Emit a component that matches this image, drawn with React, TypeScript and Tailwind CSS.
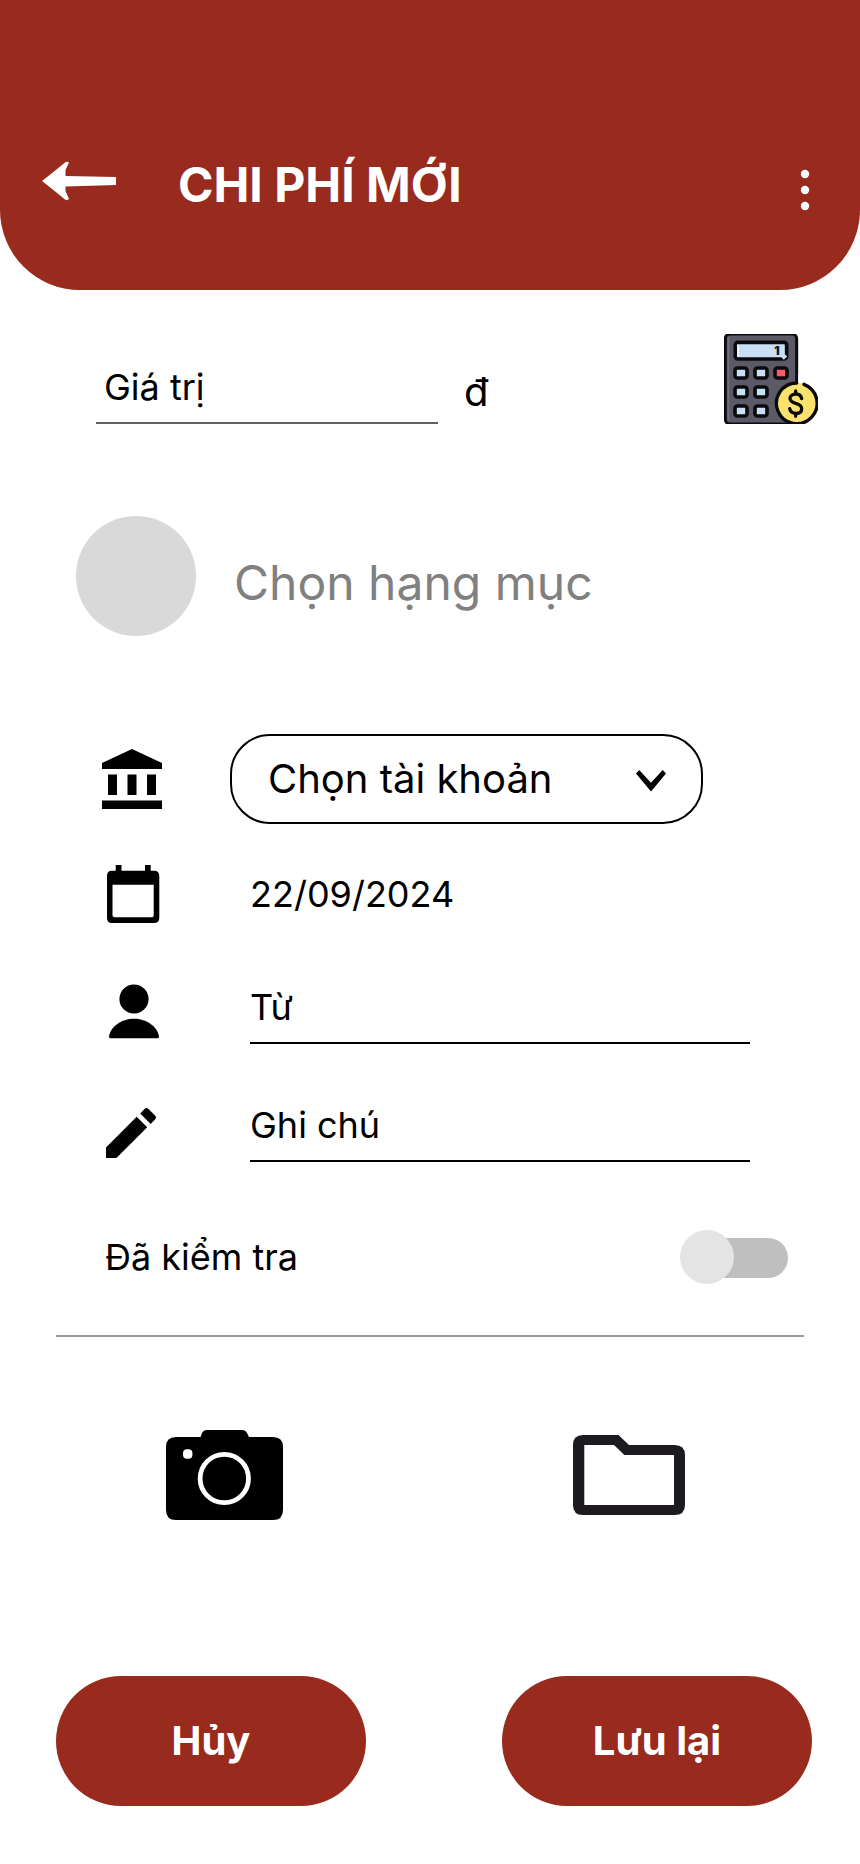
import { useState } from "react";

function BackArrow() {
  return (
    <svg viewBox="0 0 74 48" className="h-12 w-[74px]" fill="#fff" aria-hidden="true">
      <path d="M0 20 L12 10.500 L23 1.500 Q25 0 27 1.500 L23.500 9 V15 L74 16 V24 L23.500 25.500 V30 L27 38 Q25 40 23 38.500 L12 29.500 Z" />
    </svg>
  );
}

function MoreDots() {
  return (
    <svg viewBox="0 0 24 60" className="h-[60px] w-6" fill="#fff" aria-hidden="true">
      <circle cx="12" cy="19" r="4.200" />
      <circle cx="12" cy="35" r="4.200" />
      <circle cx="12" cy="51" r="4.200" />
    </svg>
  );
}

const keys = [
  { x: 51, y: 117, fill: "#c9dff5" },
  { x: 111, y: 117, fill: "#c9dff5" },
  { x: 171, y: 117, fill: "#fb5a68" },
  { x: 51, y: 174, fill: "#c9dff5" },
  { x: 111, y: 174, fill: "#c9dff5" },
  { x: 51, y: 231, fill: "#c9dff5" },
  { x: 111, y: 231, fill: "#c9dff5" },
];

function Calculator() {
  return (
    <svg viewBox="0 0 282 270" className="h-[90px] w-[94px]" aria-hidden="true">
      <rect x="4" y="0" width="214" height="270" rx="14" fill="#5d5a67" stroke="#0b0b0f" strokeWidth="9" />
      <path d="M13 10 V258" stroke="#737080" strokeWidth="5" />
      <rect x="34" y="25" width="154" height="50" rx="8" fill="#c9dff5" stroke="#0b0b0f" strokeWidth="11" />
      <path d="M42 32 V68" stroke="#e6f1fb" strokeWidth="6" />
      <path d="M176 74 L186 64" stroke="#c9dff5" strokeWidth="10" />
      <text x="151" y="63" fontFamily="Inter, sans-serif" fontWeight="900" fontSize="36" fill="#15151a">1</text>
      {keys.map((k) => (
        <rect key={`${k.x}-${k.y}`} x={k.x - 18} y={k.y - 15} width="36" height="30" rx="7" fill={k.fill} stroke="#0b0b0f" strokeWidth="11" />
      ))}
      <path d="M223 120 H290 V270 H223 Z" fill="#fff" />
      <circle cx="218" cy="208" r="62" fill="#fbe26d" />
      <path d="M240 151 A61 61 0 1 1 218 147" fill="none" stroke="#0b0b0f" strokeWidth="10" strokeLinecap="round" />
      <path
        d="M233 194 C231 184 224 180 216 180 C205 180 198 186 198 193 C198 202 205 205 215 208 C226 211 233 215 233 224 C233 233 226 238 216 238 C206 238 199 233 197 224 M215 179 V171 M215 239 V247"
        fill="none"
        stroke="#0b0b0f"
        strokeWidth="10"
        strokeLinecap="round"
      />
    </svg>
  );
}

function BankIcon() {
  return (
    <svg viewBox="0 0 60 60" className="size-[60px] shrink-0" aria-hidden="true">
      <path d="M0 14 L30 0 L60 14 V20 H0 Z M6 25.500 H15 V46 H6 Z M25.500 25.500 H34.500 V46 H25.500 Z M45 25.500 H54 V46 H45 Z M0 51.500 H60 V60 H0 Z" />
    </svg>
  );
}

function CalendarIcon() {
  return (
    <svg viewBox="0 0 60 60" className="size-[60px] shrink-0" aria-hidden="true">
      <path
        fillRule="evenodd"
        d="M13.700 1 H19.500 V6.700 H43 V1 H48.700 V6.700 H52 Q57.300 6.700 57.300 12 V54 Q57.300 59 52 59 H10 Q5 59 5 54 V12 Q5 6.700 10 6.700 H13.700 Z M10.500 20.700 V52 L12 53.300 H50.500 L51.700 52 V20.700 Z"
      />
    </svg>
  );
}

function PersonIcon() {
  return (
    <svg viewBox="0 0 60 60" className="size-[60px] shrink-0" aria-hidden="true">
      <circle cx="32" cy="15" r="14.600" />
      <path d="M8.500 54.300 Q7 54.300 7 52.500 C8.500 42.500 19.500 34.700 32 34.700 S55.500 42.500 57 52.500 Q57 54.300 55.500 54.300 Z" />
    </svg>
  );
}

function PencilIcon() {
  return (
    <svg viewBox="0 0 60 60" className="size-[60px] shrink-0" aria-hidden="true">
      <path d="M4 45.500 L34.700 14.700 L45.200 25.200 L14.400 56 H4 Z M38.200 11.500 L42.500 7 Q44.500 5 46.500 7 L53 13.500 Q55 15.500 53 17.500 L48.600 22 Z" />
    </svg>
  );
}

function CameraIcon() {
  return (
    <svg viewBox="0 0 117 90" className="h-[90px] w-[117px]" aria-hidden="true">
      <path d="M10 7 H34.500 L36 3 Q37.500 0 41 0 H76 Q79.500 0 81 3 L83 7 H107 Q117 7 117 17 V80 Q117 90 107 90 H10 Q0 90 0 80 V17 Q0 7 10 7 Z" />
      <rect x="17" y="19.300" width="9.400" height="9.400" rx="4" fill="#fff" />
      <circle cx="58.300" cy="48.500" r="24.200" fill="none" stroke="#fff" strokeWidth="4.800" />
    </svg>
  );
}

function FolderIcon() {
  return (
    <svg viewBox="0 0 112 80" className="h-20 w-28" fill="#1d1b20" aria-hidden="true">
      <path
        fillRule="evenodd"
        d="M10 0 H45.500 L56 10 H101.500 Q112 10 112 20 V70 Q112 80 101.500 80 H10 Q0 80 0 70 V10 Q0 0 10 0 Z M11.300 10 V70 H101 V20 H51.300 L41 10 Z"
      />
    </svg>
  );
}

const field =
  "h-[72px] min-w-0 border-b-2 bg-transparent text-4xl text-black placeholder:text-black placeholder:opacity-100 outline-none";

export default function App() {
  const [checked, setChecked] = useState(false);

  return (
    <div className="min-h-screen bg-white font-[Inter,sans-serif] text-black">
      <header className="flex items-center rounded-b-[80px] bg-[#982a1e] pt-[145px] pr-[43px] pb-[65px] pl-[42px]">
        <button type="button" aria-label="Quay lại" className="shrink-0">
          <BackArrow />
        </button>
        <h1 className="ml-[62px] flex-1 text-5xl leading-[80px] font-bold text-white">CHI PHÍ MỚI</h1>
        <button type="button" aria-label="Tùy chọn khác" className="shrink-0">
          <MoreDots />
        </button>
      </header>

      <form onSubmit={(e) => e.preventDefault()}>
        <div className="flex items-end pt-11 pr-[42px] pl-24">
          <input type="text" aria-label="Giá trị" placeholder="Giá trị" className={`${field} w-[342px] border-[#606060] pl-2`} />
          <span className="ml-[26px] text-[40px] leading-[64px]">đ</span>
          <button type="button" aria-label="Máy tính" className="ml-auto shrink-0">
            <Calculator />
          </button>
        </div>

        <button type="button" className="mt-[92px] ml-[76px] flex items-center gap-[38px]">
          <span className="size-[120px] rounded-full bg-[#d9d9d9]" />
          <span className="pt-3.5 text-5xl text-[#808080]">Chọn hạng mục</span>
        </button>

        <div className="mt-[98px] pr-[110px] pl-[102px]">
          <div className="flex items-center">
            <BankIcon />
            <div className="relative mr-[47px] ml-[68px] min-w-0 flex-1">
              <select
                aria-label="Chọn tài khoản"
                className="h-[90px] w-full appearance-none rounded-[40px] border-2 border-black bg-white pr-20 pl-9 text-[40px]"
              >
                <option>Chọn tài khoản</option>
              </select>
              <svg viewBox="0 0 30 22" className="pointer-events-none absolute top-9 right-[37px] h-[22px] w-[30px]" aria-hidden="true">
                <path d="M0 3.500 L3.200 0 L15 12.700 L26.700 0 L30 3.500 L15 21.500 Z" />
              </svg>
            </div>
          </div>

          <div className="mt-10 flex items-center">
            <CalendarIcon />
            <input
              type="text"
              aria-label="Ngày"
              defaultValue="22/09/2024"
              className="ml-[88px] h-[60px] min-w-0 flex-1 bg-transparent text-4xl outline-none"
            />
          </div>

          <div className="mt-12 flex items-end">
            <PersonIcon />
            <input type="text" aria-label="Từ" placeholder="Từ" className={`${field} ml-[88px] flex-1 border-black`} />
          </div>

          <div className="mt-[46px] flex items-end">
            <PencilIcon />
            <input type="text" aria-label="Ghi chú" placeholder="Ghi chú" className={`${field} ml-[88px] flex-1 border-black`} />
          </div>
        </div>

        <div className="mt-[68px] flex items-center justify-between pr-[72px] pl-[105px]">
          <label htmlFor="verified" className="text-4xl leading-[54px]">
            Đã kiểm tra
          </label>
          <input
            id="verified"
            type="checkbox"
            checked={checked}
            onChange={(e) => setChecked(e.target.checked)}
            className="relative h-[54px] w-[108px] appearance-none before:absolute before:top-2 before:right-0 before:left-4 before:h-10 before:rounded-full before:bg-[#bfbfbf] after:absolute after:top-0 after:left-0 after:size-[54px] after:rounded-full after:bg-[#e4e4e4] checked:before:right-4 checked:before:left-0 checked:before:bg-[#982a1e] checked:after:left-[54px]"
          />
        </div>

        <hr className="mt-[51px] mr-14 ml-14 border-t-2 border-[#999]" />

        <div className="mt-[93px] flex items-center justify-between pr-[175px] pl-[166px]">
          <button type="button" aria-label="Chụp ảnh">
            <CameraIcon />
          </button>
          <button type="button" aria-label="Chọn tệp">
            <FolderIcon />
          </button>
        </div>

        <div className="mt-[156px] flex gap-[136px] pr-12 pb-[58px] pl-14">
          <button type="button" className="h-[130px] flex-1 rounded-full bg-[#982a1e] text-[40px] font-bold text-white">
            Hủy
          </button>
          <button type="submit" className="h-[130px] flex-1 rounded-full bg-[#982a1e] text-[40px] font-bold text-white">
            Lưu lại
          </button>
        </div>
      </form>
    </div>
  );
}
